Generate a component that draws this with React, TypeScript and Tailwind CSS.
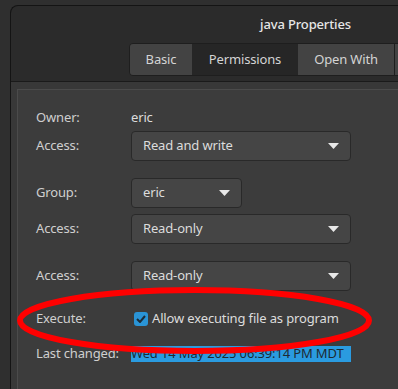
import React from "react";

function Dropdown({ label, width }: { label: string; width: string }) {
  return (
    <div
      className={`${width} h-[30px] flex items-center justify-between pl-[11px] pr-[11px] rounded-[4px] border border-[#292929] bg-[#454545] text-[#dcdcdc]`}
    >
      <span>{label}</span>
      <svg width="11" height="6" viewBox="0 0 11 6">
        <path d="M0 0 H11 L5.5 6 Z" fill="#e8e8e8" />
      </svg>
    </div>
  );
}

export default function App() {
  return (
    <div
      className="relative w-[398px] h-[389px] overflow-hidden bg-[#2f2f2f] pl-[10px] pt-[5px] text-[13px] tracking-[-0.15px]"
      style={{ fontFamily: '"Noto Sans", "Open Sans", sans-serif' }}
    >
      <div className="w-[590px] h-[400px] rounded-tl-[8px] border-l border-t border-[#141414] bg-[#2b2b2b] flex flex-col">
        {/* header */}
        <div className="h-[76px] flex flex-col border-b border-[#1a1a1a]">
          <div className="h-[37px] flex items-center justify-center pt-[1px] text-[#e6e6e6] font-medium">
            java Properties
          </div>
          <div className="ml-[118px] flex h-[33px] rounded-l-[4px] border border-[#1e1e1e] overflow-hidden text-[#d4d4d4]">
            <div className="w-[62px] flex items-center justify-center bg-[#434343]">Basic</div>
            <div className="w-[106px] flex items-center justify-center bg-[#262626]">Permissions</div>
            <div className="w-[97px] flex items-center justify-center bg-[#434343] border-r border-[#1e1e1e]">Open With</div>
            <div className="w-[80px] bg-[#434343]" />
          </div>
        </div>
        {/* content */}
        <div className="flex-1 bg-[#383838] pl-[6px] pt-[7px]">
          <div className="h-full border-l border-t border-[#4b4b4b] bg-[#3c3c3c] pl-[18px] pt-[18px] text-[#cfcfcf]">
            <div className="grid grid-cols-[95px_1fr] items-center">
              <div className="h-[20px] flex items-center">Owner:</div>
              <div className="h-[20px] flex items-center text-[#dcdcdc]">eric</div>

              <div className="mt-[3px]">Access:</div>
              <div className="mt-[3px]">
                <Dropdown label="Read and write" width="w-[220px]" />
              </div>

              <div className="mt-[17px]">Group:</div>
              <div className="mt-[17px]">
                <Dropdown label="eric" width="w-[111px]" />
              </div>

              <div className="mt-[6px]">Access:</div>
              <div className="mt-[6px]">
                <Dropdown label="Read-only" width="w-[220px]" />
              </div>

              <div className="mt-[17px]">Access:</div>
              <div className="mt-[17px]">
                <Dropdown label="Read-only" width="w-[220px]" />
              </div>

              <div className="mt-[18px] h-[20px] flex items-center">Execute:</div>
              <div className="mt-[18px] h-[20px] flex items-center gap-[4px] pl-[3px]">
                <div className="w-[14px] h-[14px] rounded-[3px] bg-[#2a94d6] flex items-center justify-center">
                  <svg width="10" height="8" viewBox="0 0 10 8">
                    <path d="M1 4 L4 7 L9 1" fill="none" stroke="#1c2c38" strokeWidth="2" />
                  </svg>
                </div>
                <span className="text-[#dcdcdc]">Allow executing file as program</span>
              </div>

              <div className="mt-[16px] h-[18px] flex items-center">Last changed:</div>
              <div className="mt-[16px] h-[18px] flex items-center">
                <span className="w-[220px] h-[16px] flex items-center bg-[#2a9be0] text-[#1e2a33] whitespace-nowrap">
                  Wed 14 May 2025 06:39:14 PM MDT
                </span>
              </div>
            </div>
          </div>
        </div>
      </div>

      {/* red annotation ellipse */}
      <svg
        className="absolute left-0 top-0 pointer-events-none"
        width="398"
        height="389"
        viewBox="0 0 398 389"
      >
        <ellipse cx="194.5" cy="320.5" rx="174.5" ry="30.5" fill="none" stroke="#ff0000" strokeWidth="6" />
      </svg>
    </div>
  );
}
